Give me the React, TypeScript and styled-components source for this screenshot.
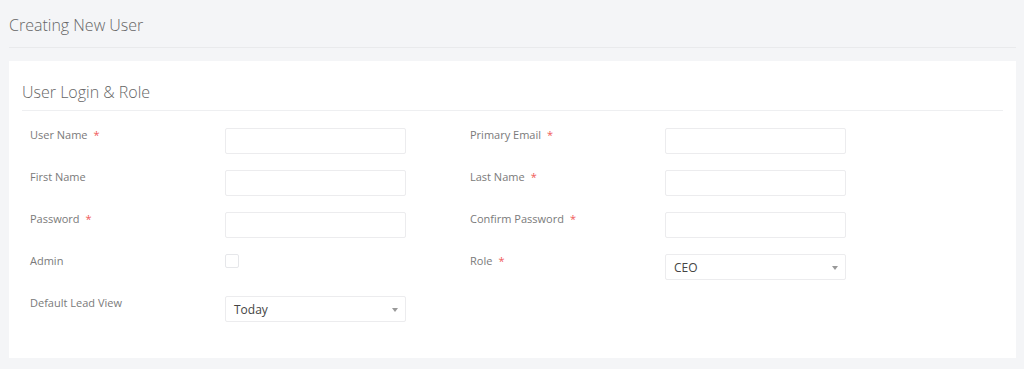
import React from "react";
import styled, { createGlobalStyle } from "styled-components";

const Global = createGlobalStyle`
  html, body { margin: 0; padding: 0; background: #f4f5f7; }
  body { font-family: "Open Sans", "Liberation Sans", sans-serif; }
  * { box-sizing: border-box; }
`;

const Page = styled.div`
  padding: 0 8px 11px 9px;
  background: #f4f5f7;
`;

const PageHeader = styled.div`
  height: 48px;
  border-bottom: 1px solid #e9eaec;
  display: flex;
  align-items: center;
  margin-bottom: 13px;
`;

const PageTitle = styled.h1`
  margin: 0;
  margin-top: 2px;
  font-size: 16px;
  font-weight: 300;
  color: #666;
`;

const Card = styled.div`
  background: #fff;
  padding: 14px 13px 36px 13px;
`;

const SectionTitle = styled.h2`
  margin: 0;
  font-size: 16px;
  font-weight: 300;
  color: #666;
  height: 36px;
  line-height: 34px;
  border-bottom: 1px solid #eeeff1;
  margin-bottom: 17px;
`;

const FormGrid = styled.div`
  display: grid;
  grid-template-columns: 440px 440px;
  row-gap: 16px;
  padding-left: 8px;
`;

const Field = styled.div`
  display: flex;
  align-items: flex-start;
  height: 26px;
`;

const Label = styled.label`
  width: 195px;
  flex: none;
  font-size: 11px;
  color: #7a7a7a;
  line-height: 14px;
`;

const Req = styled.span`
  color: #f05a5a;
  margin-left: 6px;
`;

const TextInput = styled.input`
  width: 181px;
  height: 26px;
  border: 1px solid #ececee;
  border-radius: 2px;
  background: #fff;
  outline: none;
  padding: 0 8px;
  font-family: inherit;
  font-size: 12px;
`;

const SelectBox = styled.div`
  width: 181px;
  height: 26px;
  border: 1px solid #ececee;
  border-radius: 2px;
  background: #fff;
  display: flex;
  align-items: center;
  justify-content: space-between;
  padding: 0 7px 0 8px;
  font-size: 12px;
  color: #444;
`;

const Caret = styled.span`
  width: 0;
  height: 0;
  border-left: 3px solid transparent;
  border-right: 3px solid transparent;
  border-top: 4px solid #999;
  margin-top: 1px;
`;

const Check = styled.span`
  display: block;
  width: 14px;
  height: 14px;
  border: 1px solid #e6e7ea;
  border-radius: 2px;
  background: #fff;
`;

type Item =
  | { label: string; req?: boolean; kind: "text" }
  | { label: string; req?: boolean; kind: "select"; value: string }
  | { label: string; req?: boolean; kind: "check" }
  | { label: string; kind: "empty" };

const items: Item[] = [
  { label: "User Name", req: true, kind: "text" },
  { label: "Primary Email", req: true, kind: "text" },
  { label: "First Name", kind: "text" },
  { label: "Last Name", req: true, kind: "text" },
  { label: "Password", req: true, kind: "text" },
  { label: "Confirm Password", req: true, kind: "text" },
  { label: "Admin", kind: "check" },
  { label: "Role", req: true, kind: "select", value: "CEO" },
  { label: "Default Lead View", kind: "select", value: "Today" },
  { label: "", kind: "empty" },
];

export default function App() {
  return (
    <Page>
      <Global />
      <PageHeader>
        <PageTitle>Creating New User</PageTitle>
      </PageHeader>
      <Card>
        <SectionTitle>User Login &amp; Role</SectionTitle>
        <FormGrid>
          {items.map((it, i) => {
            if (it.kind === "empty") return <Field key={i} />;
            return (
              <Field key={i}>
                <Label>
                  {it.label}
                  {"req" in it && it.req ? <Req>*</Req> : null}
                </Label>
                {it.kind === "text" && <TextInput type="text" />}
                {it.kind === "check" && <Check />}
                {it.kind === "select" && (
                  <SelectBox>
                    <span>{it.value}</span>
                    <Caret />
                  </SelectBox>
                )}
              </Field>
            );
          })}
        </FormGrid>
      </Card>
    </Page>
  );
}
